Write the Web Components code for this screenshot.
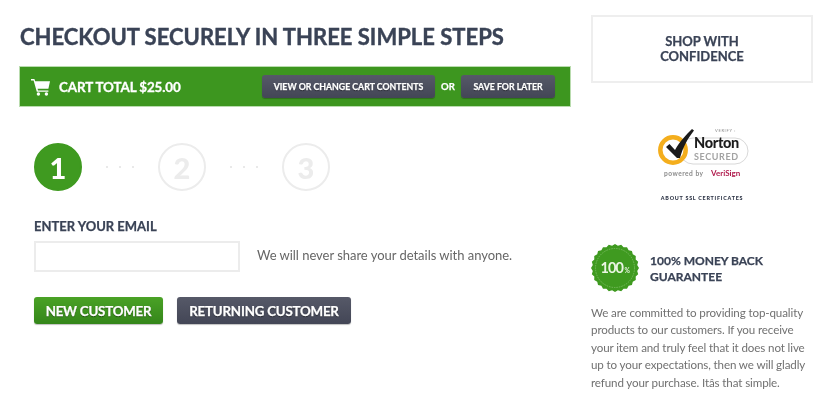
<!DOCTYPE html>
<html>
<head>
<meta charset="utf-8">
<style>
html,body{margin:0;padding:0;background:#fff;}
body{font-family:Lato,"Liberation Sans",sans-serif;color:#3a4356;width:832px;height:412px;overflow:hidden;}
</style>
</head>
<body>
<checkout-page>
    <cart-bar total="CART TOTAL $25.00"></cart-bar>
    <step-list></step-list>
    <email-form></email-form>
    <shop-sidebar slot="side"></shop-sidebar>
</checkout-page>

<script>
class CheckoutPage extends HTMLElement {
    connectedCallback(){
        this.attachShadow({mode:"open"})
        this.shadowRoot.innerHTML=`
<style>
:host{display:flex;gap:20px;padding:15px 19px 0 19px;filter:blur(0.6px);}
main{width:552px;}
aside{width:222px;}
h1{
    margin:9px 0 16px 1px;
    font-size:22px;
    line-height:26px;
    font-weight:700;
    -webkit-text-stroke:.4px #3a4356;
    color:#3a4356;
    white-space:nowrap;
}
</style>
<main>
    <h1>CHECKOUT SECURELY IN THREE SIMPLE STEPS</h1>
    <slot></slot>
</main>
<aside><slot name="side"></slot></aside>
`
    }
}
window.customElements.define("checkout-page",CheckoutPage)

class DarkButton extends HTMLElement {
    connectedCallback(){
        this.attachShadow({mode:"open"})
        this.shadowRoot.innerHTML=`
<style>
:host{
    display:inline-flex;
    align-items:center;
    justify-content:center;
    box-sizing:border-box;
    border-radius:3px;
    color:#fff;
    font-weight:700;
    white-space:nowrap;
    -webkit-text-stroke:.25px #fff;
    background:linear-gradient(#565968,#434656);
    text-shadow:0 1px 1px rgba(0,0,0,.5);
    box-shadow:0 1px 1px rgba(0,0,0,.25);
}
:host([green]){
    background:linear-gradient(#4aa226,#34861a);
}
</style>
<slot></slot>
`
    }
}
window.customElements.define("dark-button",DarkButton)

class CartBar extends HTMLElement {
    connectedCallback(){
        this.attachShadow({mode:"open"})
        this.shadowRoot.innerHTML=`
<style>
:host{
    display:flex;
    align-items:center;
    box-sizing:border-box;
    height:41px;
    background:#3d961f;
    border:1px solid #b9dcae;
    color:#fff;
    padding-left:11px;
}
svg{width:19px;height:18px;flex:none;margin-right:9px;}
.total{font-size:13.4px;font-weight:700;width:203px;white-space:nowrap;letter-spacing:-.1px;-webkit-text-stroke:.3px #fff;}
dark-button{height:23px;font-size:8.75px;}
.view{width:173px;}
.or{width:26px;text-align:center;font-size:9.5px;font-weight:700;-webkit-text-stroke:.25px #fff;}
.save{width:94px;}
</style>
<svg viewBox="0 0 19 18">
    <path fill="#fff" d="M0 1h3.4l.8 2.2H19l-1.6 7.6H6.6l.4 1.6h10.4v1.4H5.8L2.6 2.6H0z"/>
    <circle fill="#fff" cx="7.4" cy="16" r="1.7"/>
    <circle fill="#fff" cx="15.4" cy="16" r="1.7"/>
</svg>
<span class="total"></span>
<dark-button class="view">VIEW OR CHANGE CART CONTENTS</dark-button>
<span class="or">OR</span>
<dark-button class="save">SAVE FOR LATER</dark-button>
`
        this.shadowRoot.querySelector(".total").textContent = this.getAttribute("total")
    }
}
window.customElements.define("cart-bar",CartBar)

class StepList extends HTMLElement {
    connectedCallback(){
        this.attachShadow({mode:"open"})
        this.shadowRoot.innerHTML=`
<style>
:host{display:flex;align-items:center;margin:36px 0 0 15px;height:48px;}
.step{
    box-sizing:border-box;
    width:48px;
    height:48px;
    border-radius:50%;
    border:2.5px solid #ececec;
    color:#ececec;
    display:flex;
    align-items:center;
    justify-content:center;
    font-size:29px;
    font-weight:900;
}
.step.on{background:#3f9a20;border-color:#3f9a20;color:#fff;}
.dots{width:76px;display:flex;justify-content:center;gap:10.5px;}
.dots i{width:2.5px;height:2.5px;border-radius:50%;background:#e2e2e2;}
</style>
<div class="step on">1</div>
<div class="dots"><i></i><i></i><i></i></div>
<div class="step">2</div>
<div class="dots"><i></i><i></i><i></i></div>
<div class="step">3</div>
`
    }
}
window.customElements.define("step-list",StepList)

class EmailForm extends HTMLElement {
    connectedCallback(){
        this.attachShadow({mode:"open"})
        this.shadowRoot.innerHTML=`
<style>
:host{display:block;margin:27px 0 0 15px;}
label{display:block;font-size:13px;line-height:16px;font-weight:700;color:#3a4356;-webkit-text-stroke:.25px #3a4356;}
.row{display:flex;align-items:center;gap:17px;margin-top:7px;}
.field{box-sizing:border-box;width:206px;height:31px;border:2px solid #ececec;background:#fff;}
.hint{font-size:13px;color:#666;white-space:nowrap;letter-spacing:-.03px;margin-bottom:3px;}
.buttons{display:flex;gap:14px;margin-top:25px;}
dark-button{height:27px;font-size:13.3px;letter-spacing:-.2px;}
.new{width:129px;}
.back{width:174px;}
</style>
<label>ENTER YOUR EMAIL</label>
<div class="row">
    <div class="field"></div>
    <span class="hint">We will never share your details with anyone.</span>
</div>
<div class="buttons">
    <dark-button class="new" green>NEW CUSTOMER</dark-button>
    <dark-button class="back">RETURNING CUSTOMER</dark-button>
</div>
`
    }
}
window.customElements.define("email-form",EmailForm)

class NortonSeal extends HTMLElement {
    connectedCallback(){
        this.attachShadow({mode:"open"})
        this.shadowRoot.innerHTML=`
<style>
:host{display:block;width:100px;height:62px;margin:0 auto;}
svg{display:block;}
text{font-family:Lato,"Liberation Sans",sans-serif;}
</style>
<svg width="100" height="62" viewBox="0 0 100 62">
    <rect x="28" y="17" width="68" height="26" rx="13" fill="#fff" stroke="#d8d8d8" stroke-width="1"/>
    <text x="63" y="11" font-size="4" letter-spacing=".7" fill="#888">VERIFY ›</text>
    <circle cx="21" cy="29" r="12.7" fill="#fff" stroke="#f4ae1d" stroke-width="4.5"/>
    <path d="M14 26l3.5-3 5.5 6C28 20 34 14 40 8l2 1.5C36 17 31 26 28 37h-3z" fill="#1b1b1b"/>
    <text x="42" y="27" font-size="14.5" font-weight="900" letter-spacing="-.3" fill="#1d1d1d">Norton</text>
    <text x="42" y="39" font-size="9" font-weight="700" letter-spacing=".6" fill="#a2a2a2">SECURED</text>
    <text x="12" y="55" font-size="6.6" font-weight="700" letter-spacing=".5" fill="#8a8a8a">powered by</text>
    <text x="59" y="55" font-size="8" font-weight="700" fill="#b01a4c">VeriSign</text>
</svg>
`
    }
}
window.customElements.define("norton-seal",NortonSeal)

class MoneyBadge extends HTMLElement {
    connectedCallback(){
        this.attachShadow({mode:"open"})
        // scalloped edge
        let points = ""
        for (let i = 0; i < 48; i++) {
            const r = i % 2 === 0 ? 24 : 22.4
            const a = i * Math.PI / 24
            points += (24 + r * Math.cos(a)).toFixed(2) + "," + (24 + r * Math.sin(a)).toFixed(2) + " "
        }
        this.shadowRoot.innerHTML=`
<style>
:host{display:block;width:48px;height:48px;flex:none;}
svg{display:block;}
text{font-family:Lato,"Liberation Sans",sans-serif;font-weight:700;fill:#eaf5e3;}
</style>
<svg width="48" height="48" viewBox="0 0 48 48">
    <polygon points="${points}" fill="#3f9a20"/>
    <circle cx="24" cy="24" r="19.5" fill="none" stroke="#7fbf68" stroke-width=".8" stroke-dasharray="1.5 1"/>
    <text x="9.5" y="29" font-size="14.5" letter-spacing="-.9">100</text>
    <text x="33.5" y="29" font-size="6.5">%</text>
</svg>
`
    }
}
window.customElements.define("money-badge",MoneyBadge)

class ShopSidebar extends HTMLElement {
    connectedCallback(){
        this.attachShadow({mode:"open"})
        this.shadowRoot.innerHTML=`
<style>
:host{display:block;}
.box{
    box-sizing:border-box;
    height:68px;
    border:2px solid #eeeeee;
    display:flex;
    align-items:center;
    justify-content:center;
    text-align:center;
    font-size:13px;
    line-height:15px;
    font-weight:700;
    color:#3a4356;
    -webkit-text-stroke:.25px #3a4356;
}
norton-seal{margin-top:38px;}
.ssl{
    margin-top:11px;
    text-align:center;
    font-size:5.4px;
    line-height:8px;
    font-weight:900;
    letter-spacing:.75px;
    color:#2c3345;
}
.money{display:flex;align-items:center;gap:11px;margin-top:42px;}
h3{margin:1px 0 0 0;font-size:12px;line-height:16px;font-weight:700;color:#3a4356;-webkit-text-stroke:.25px #3a4356;}
p{
    margin:11.5px 0 0 0;
    font-size:11.6px;
    line-height:17.5px;
    letter-spacing:-.12px;
    color:#717171;
    white-space:nowrap;
}
</style>
<div class="box"><span>SHOP WITH<br>CONFIDENCE</span></div>
<norton-seal></norton-seal>
<div class="ssl">ABOUT SSL CERTIFICATES</div>
<div class="money">
    <money-badge></money-badge>
    <h3>100% MONEY BACK<br>GUARANTEE</h3>
</div>
<p>We are committed to providing top-quality<br>products to our customers. If you receive<br>your item and truly feel that it does not live<br>up to your expectations, then we will gladly<br>refund your purchase. Itâs that simple.</p>
`
    }
}
window.customElements.define("shop-sidebar",ShopSidebar)
</script>
</body>
</html>
